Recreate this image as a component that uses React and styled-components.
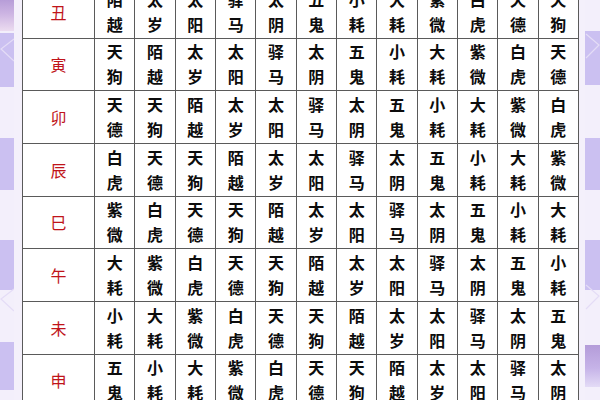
import React from "react";
import styled, { createGlobalStyle } from "styled-components";

const Global = createGlobalStyle`
  html, body { margin: 0; padding: 0; background: #f4f0fb; }
  #root { width: 600px; height: 400px; }
`;

const Page = styled.div`
  width: 600px;
  height: 400px;
  overflow: hidden;
  display: flex;
  align-items: flex-start;
  background: #f4f0fb;
`;

const Rail = styled.div`
  width: ${(p) => p.$w}px;
  height: 400px;
  flex: none;
  display: flex;
  flex-direction: column;
  margin-left: ${(p) => p.$ml || 0}px;
`;

const tones = {
  light: "#f3effb",
  lav: "#cbc0f1",
  topGrad: "linear-gradient(180deg, #b79dd8 0%, #cdb5e3 45%, #ecdcf0 100%)",
  botGrad: "linear-gradient(180deg, #b49cd9 0%, #c6b3e8 55%, #e3dbf6 100%)",
};

const Seg = styled.div`
  position: relative;
  height: ${(p) => p.$h}px;
  flex: none;
  background: ${(p) => tones[p.$tone]};
`;

const ChevronSvg = styled.svg`
  position: absolute;
  left: 0;
  top: ${(p) => p.$top}px;
`;

const Chevron = ({ dir, top, w }) => (
  <ChevronSvg $top={top} width={w} height="28" viewBox={`0 0 ${w} 28`}>
    {dir === "left" ? (
      <polyline points={`${w},2 1,12 ${w},24`} fill="none" stroke="#e4dcf6" strokeWidth="1.2" />
    ) : (
      <polyline points={`1,2 ${w - 1},13 1,26`} fill="none" stroke="#e4dcf6" strokeWidth="1.2" />
    )}
  </ChevronSvg>
);

const TableGrid = styled.div`
  margin-left: 8px;
  margin-top: -15px;
  width: 557px;
  box-sizing: border-box;
  flex: none;
  display: grid;
  grid-template-columns: 71px repeat(12, 1fr);
  grid-auto-rows: 51.67px;
  gap: 1px;
  padding: 1px;
  background: #5a5a5a;
`;

const LabelCell = styled.div`
  background: #fff;
  display: flex;
  align-items: center;
  justify-content: center;
  color: #c0141a;
  font-family: "Noto Sans CJK SC", "Noto Sans", sans-serif;
  font-size: 16px;
  font-weight: 400;
`;

const NameCell = styled.div`
  background: #fff;
  display: flex;
  flex-direction: column;
  align-items: center;
  justify-content: center;
  color: #0c0c0c;
  font-family: "Noto Sans CJK SC", "Noto Sans", sans-serif;
  font-size: 16px;
  font-weight: 700;
  line-height: 25px;
`;

const SEQ = ["天狗", "陌越", "太岁", "太阳", "驿马", "太阴", "五鬼", "小耗", "大耗", "紫微", "白虎", "天德"];
const ROWS = [
  ["丑", 1],
  ["寅", 0],
  ["卯", 11],
  ["辰", 10],
  ["巳", 9],
  ["午", 8],
  ["未", 7],
  ["申", 6],
];

const leftSegs = [
  { h: 31, tone: "topGrad" },
  { h: 2, tone: "light" },
  { h: 54, tone: "lav", chev: 4 },
  { h: 51, tone: "light" },
  { h: 52, tone: "lav" },
  { h: 50, tone: "light" },
  { h: 50, tone: "lav" },
  { h: 52, tone: "light", chev: -3 },
  { h: 48, tone: "lav" },
  { h: 10, tone: "light" },
];

const rightSegs = [
  { h: 31, tone: "light" },
  { h: 54, tone: "lav", chev: 1 },
  { h: 53, tone: "light" },
  { h: 52, tone: "lav" },
  { h: 50, tone: "light" },
  { h: 50, tone: "lav" },
  { h: 55, tone: "light", chev: -7 },
  { h: 42, tone: "botGrad" },
  { h: 13, tone: "light" },
];

export default function App() {
  return (
    <Page>
      <Global />
      <Rail $w={14}>
        {leftSegs.map((s, i) => (
          <Seg key={i} $h={s.h} $tone={s.tone}>
            {s.chev !== undefined && <Chevron dir="left" top={s.chev} w={14} />}
          </Seg>
        ))}
      </Rail>
      <TableGrid>
        {ROWS.map(([label, start]) => (
          <React.Fragment key={label}>
            <LabelCell>{label}</LabelCell>
            {Array.from({ length: 12 }, (_, i) => {
              const name = SEQ[(start + i) % 12];
              return (
                <NameCell key={i}>
                  <span>{name[0]}</span>
                  <span>{name[1]}</span>
                </NameCell>
              );
            })}
          </React.Fragment>
        ))}
      </TableGrid>
      <Rail $w={15} $ml={6}>
        {rightSegs.map((s, i) => (
          <Seg key={i} $h={s.h} $tone={s.tone}>
            {s.chev !== undefined && <Chevron dir="right" top={s.chev} w={15} />}
          </Seg>
        ))}
      </Rail>
    </Page>
  );
}
